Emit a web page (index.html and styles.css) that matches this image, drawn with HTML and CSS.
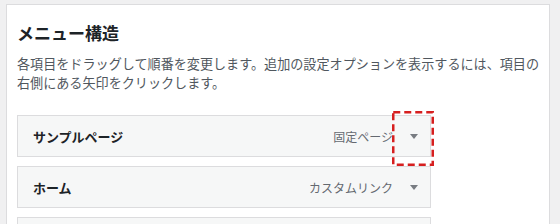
FILE: index.html
```html
<!DOCTYPE html>
<html lang="ja">

<head>
    <meta charset="UTF-8" />
    <title>メニュー構造</title>
    <link rel="stylesheet" href="styles.css">
</head>

<body>
    <div class="panel">
        <h2>メニュー構造</h2>
        <p class="hint">各項目をドラッグして順番を変更します。追加の設定オプションを表示するには、項目の右側にある矢印をクリックします。</p>

        <ul class="menu">
            <li class="menu-item">
                <span class="title">サンプルページ</span>
                <span class="controls">
                    <span class="type">固定ページ</span>
                    <span class="toggle"></span>
                </span>
                <svg class="highlight" width="42" height="55" viewBox="0 0 42 55">
                    <rect x="1.25" y="1.25" width="39.5" height="52.5" fill="none" stroke="#d61f1f" stroke-width="2.5" stroke-dasharray="7 4" />
                </svg>
            </li>
            <li class="menu-item">
                <span class="title">ホーム</span>
                <span class="controls">
                    <span class="type">カスタムリンク</span>
                    <span class="toggle"></span>
                </span>
            </li>
            <li class="menu-item">
                <span class="title">&nbsp;</span>
            </li>
        </ul>
    </div>
</body>

</html>
```

FILE: styles.css
```css
html,
body {
    height: 100%;
}

body {
    margin: 0;
    padding: 4px 10px 0 6px;
    box-sizing: border-box;
    background-color: #f0f0f1;
    font-family: "Noto Sans CJK JP", "Noto Sans", sans-serif;
    color: #3c434a;
    overflow: hidden;
}

.panel {
    background: #fff;
    border: 1px solid #dcdcde;
    border-bottom: none;
    padding: 0 10px;
    height: 100%;
    box-sizing: border-box;
    overflow: hidden;
}

.panel h2 {
    margin: 16px 0 0 0;
    font-size: 17px;
    line-height: 24px;
    font-weight: bold;
    color: #1d2327;
}

.hint {
    margin: 9px -10px 0 0;
    font-size: 13.1px;
    line-height: 19px;
    color: #50575e;
}

.menu {
    list-style: none;
    margin: 23px 0 0 0;
    padding: 0;
}

.menu-item {
    position: relative;
    width: 414px;
    height: 42px;
    box-sizing: border-box;
    margin-bottom: 9px;
    padding: 0 12px 0 15px;
    background: #f6f7f7;
    border: 1px solid #dcdcde;
    display: flex;
    align-items: center;
    justify-content: space-between;
}

.menu-item .title {
    font-size: 13px;
    font-weight: bold;
    color: #1d2327;
}

.controls {
    display: flex;
    align-items: center;
}

.type {
    font-size: 12px;
    color: #646970;
}

.toggle {
    width: 0;
    height: 0;
    margin-left: 17px;
    border-left: 4px solid transparent;
    border-right: 4px solid transparent;
    border-top: 5px solid #787c82;
}

.highlight {
    position: absolute;
    left: 374px;
    top: -5px;
}
```
